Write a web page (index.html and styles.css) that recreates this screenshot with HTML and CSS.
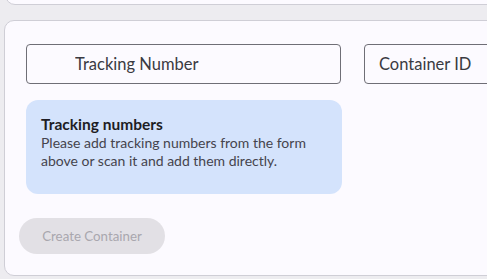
FILE: index.html
```html
<!DOCTYPE html>
<html lang="en">
<head>
  <meta charset="UTF-8">
  <meta name="viewport" content="width=device-width, initial-scale=1.0">
  <title>Create Container</title>
  <link rel="stylesheet" href="styles.css">
</head>
<body>
  <div class="card card-top"></div>

  <div class="card card-main">
    <div class="field-row">
      <div class="field field-tracking">
        <input type="text" placeholder="Tracking Number" autocomplete="off">
      </div>
      <div class="field field-container">
        <input type="text" placeholder="Container ID" autocomplete="off">
      </div>
    </div>

    <div class="info-box">
      <div class="info-title">Tracking numbers</div>
      <div class="info-text">Please add tracking numbers from the form above or scan it and add them directly.</div>
    </div>

    <button class="create-button" disabled>Create Container</button>
  </div>
</body>
</html>
```

FILE: styles.css
```css
body {
  font-family: Lato, 'Open Sans', sans-serif;
  margin: 0;
  padding: 0;
  background-color: #edecf0;
  color: #333;
  overflow: hidden;
  height: 100vh;
}

.card {
  background-color: #fcfaff;
  border: 1px solid #cfced6;
  border-radius: 10px;
  box-sizing: border-box;
}

.card-top {
  height: 20px;
  margin: -15px -40px 0 5px;
}

.card-main {
  margin: 15px -40px 0 4px;
  height: 256px;
  padding: 23px 0 0 21px;
}

.field-row {
  display: flex;
  gap: 23px;
}

.field input {
  box-sizing: border-box;
  height: 40px;
  border: 1px solid #6f6e76;
  border-radius: 4px;
  background: transparent;
  font-family: inherit;
  font-size: 16.5px;
  color: #3a3a42;
  outline: none;
}

.field input::placeholder {
  color: #3a3a42;
  opacity: 1;
}

.field-tracking input {
  width: 315px;
  padding-left: 48px;
}

.field-container input {
  width: 180px;
  padding-left: 14px;
}

.info-box {
  width: 316px;
  height: 94px;
  box-sizing: border-box;
  margin-top: 16px;
  padding: 15px 15px;
  background-color: #d4e3fc;
  border-radius: 12px;
}

.info-title {
  font-size: 15.5px;
  font-weight: bold;
  color: #1e1d24;
  line-height: 19px;
}

.info-text {
  font-size: 14px;
  line-height: 18px;
  color: #45444d;
}

.create-button {
  display: block;
  margin: 24px 0 0 -7px;
  width: 146px;
  height: 36px;
  border: none;
  border-radius: 18px;
  background-color: #e2e0e5;
  color: #a9a7ae;
  font-family: inherit;
  font-size: 13.3px;
  cursor: not-allowed;
}
```
